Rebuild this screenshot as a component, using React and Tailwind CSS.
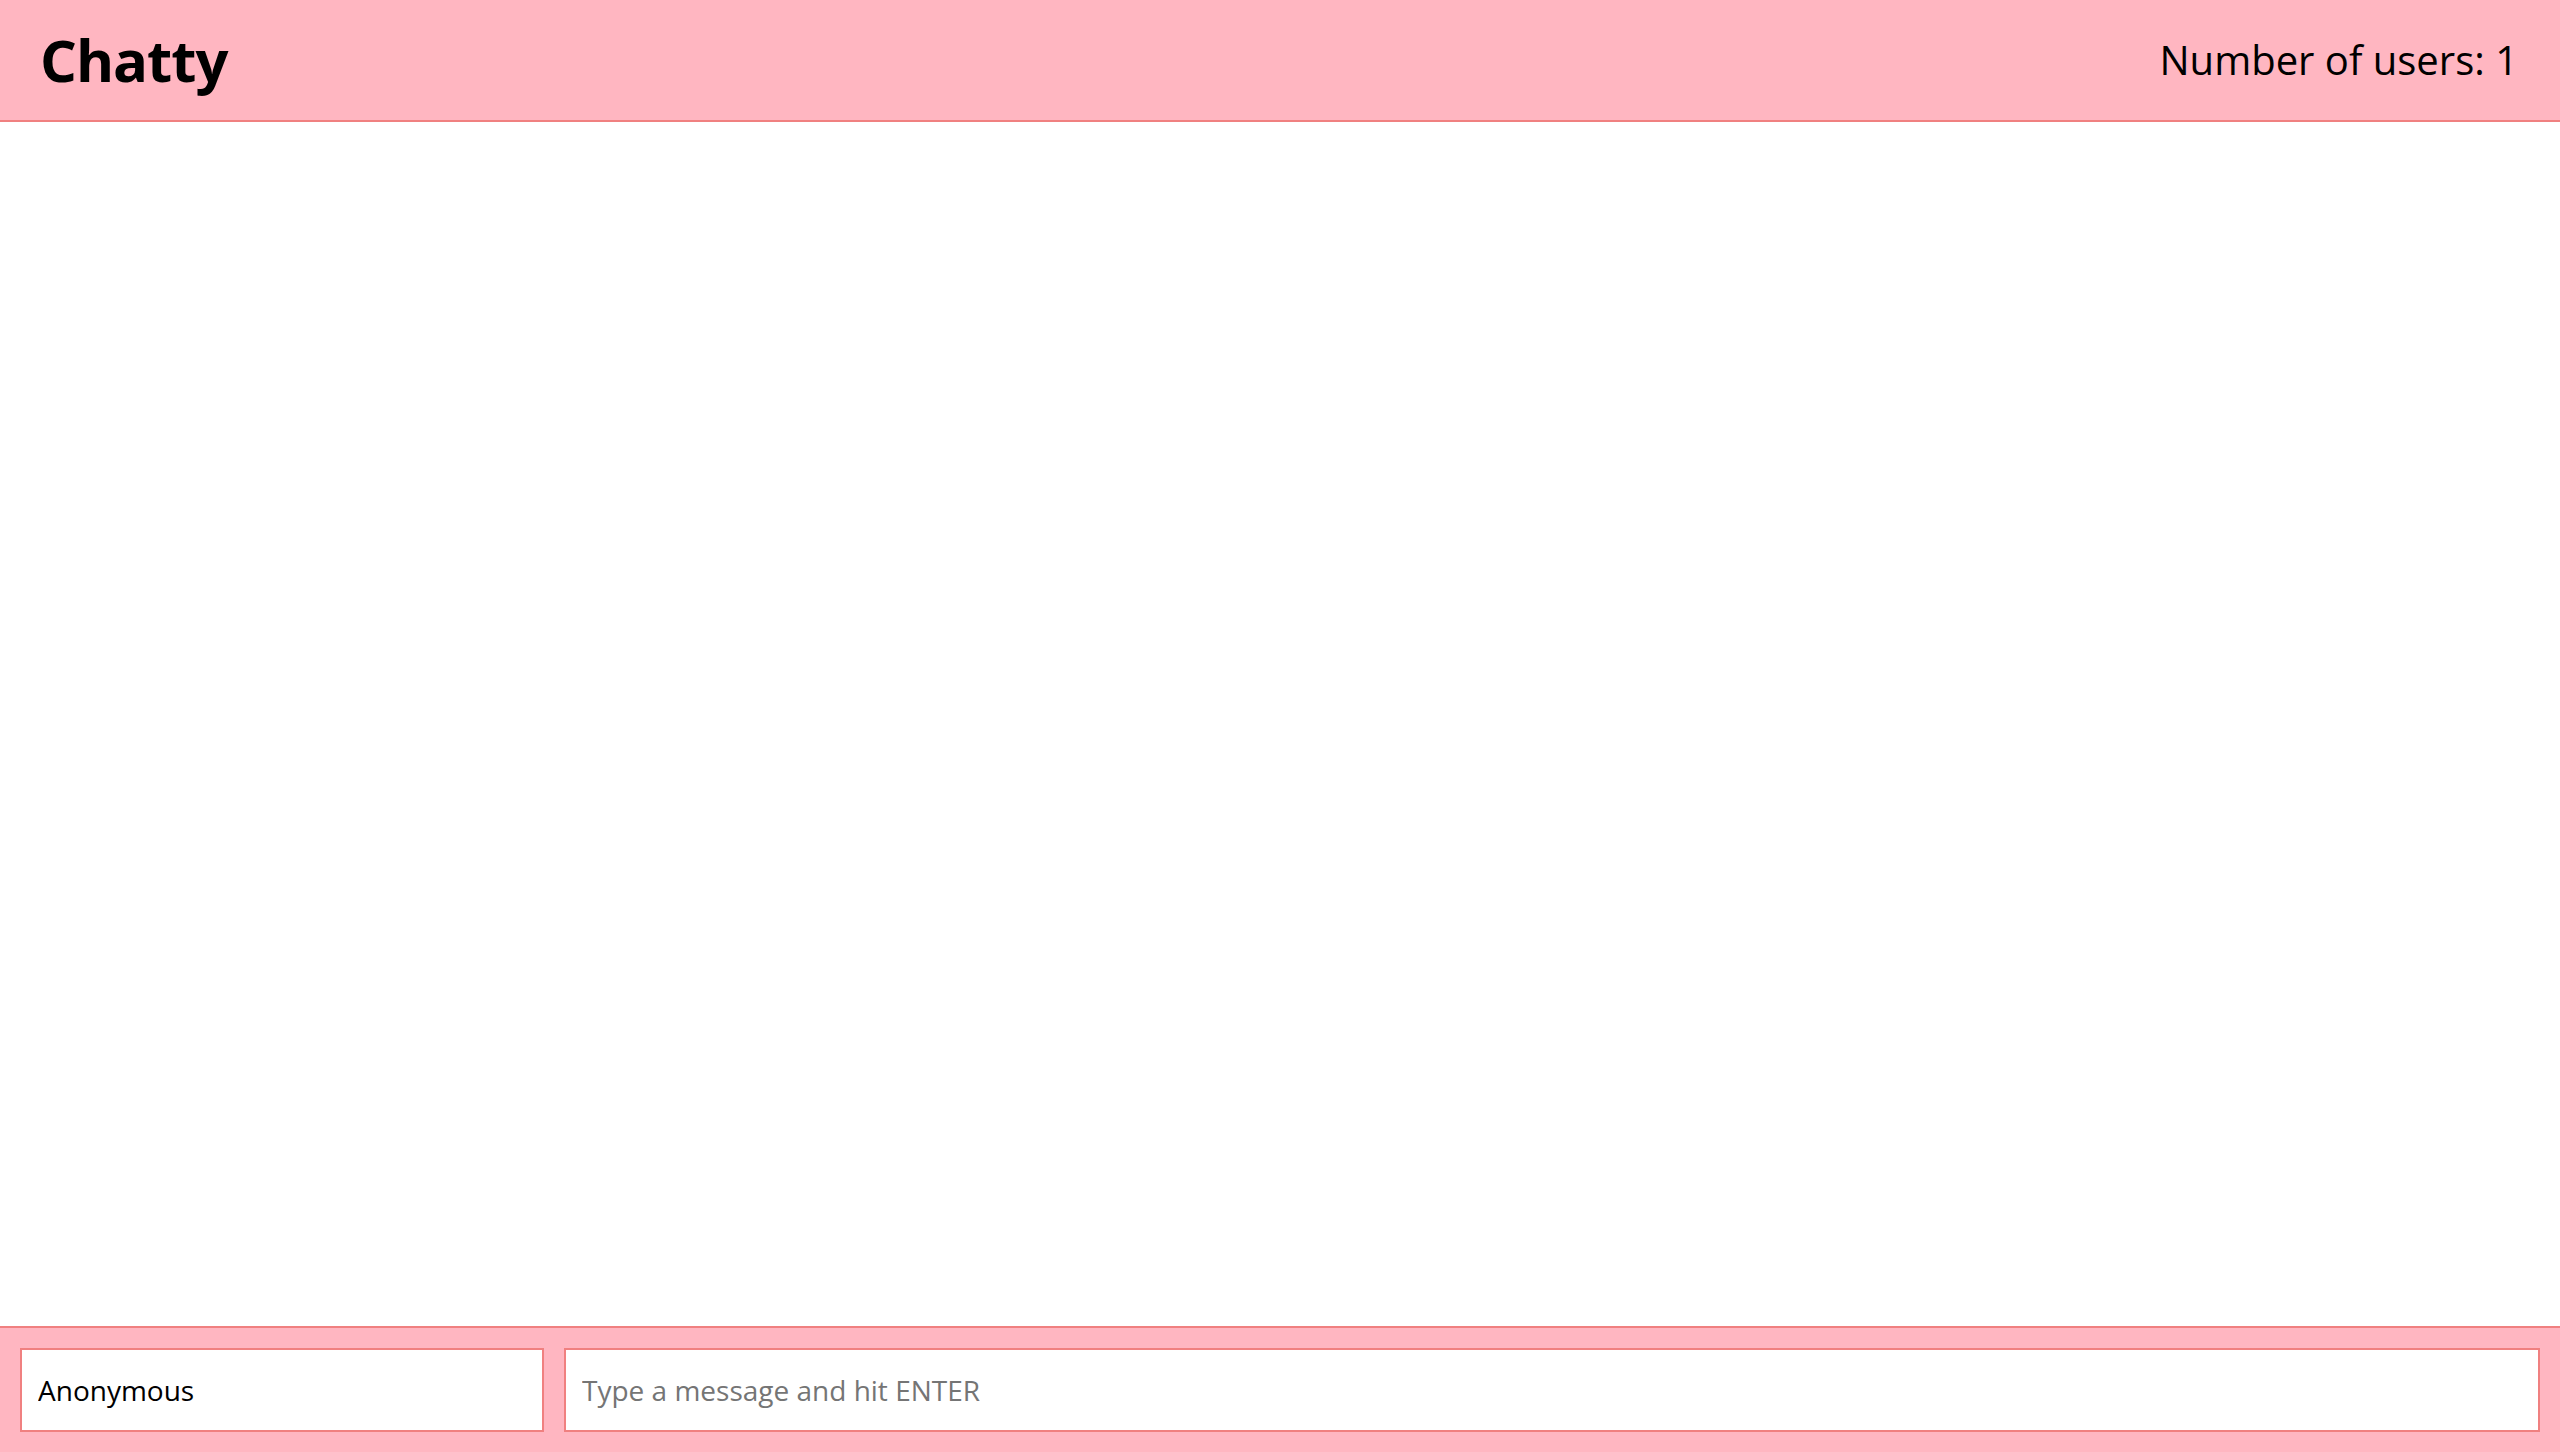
import React from 'react';

export default function App() {
  return (
    <div className="flex h-screen flex-col bg-white font-['Open_Sans',sans-serif] text-black">
      <nav className="flex h-[122px] shrink-0 items-center justify-between border-b-2 border-[#f08080] bg-[#ffb6c1] pl-[40px] pr-[42px]">
        <a className="text-[58px] font-bold leading-none tracking-[-1px]">Chatty</a>
        <span className="text-[40px] leading-none">Number of users: 1</span>
      </nav>

      <main className="flex-1" />

      <footer className="flex h-[126px] shrink-0 items-center gap-5 border-t-2 border-[#f08080] bg-[#ffb6c1] px-5">
        <input
          className="h-[84px] w-[524px] shrink-0 border-2 border-[#f08080] bg-white px-4 text-[28px] outline-none"
          defaultValue="Anonymous"
        />
        <input
          className="h-[84px] min-w-0 flex-1 border-2 border-[#f08080] bg-white px-4 text-[28px] outline-none placeholder:text-[#757575]"
          placeholder="Type a message and hit ENTER"
        />
      </footer>
    </div>
  );
}
